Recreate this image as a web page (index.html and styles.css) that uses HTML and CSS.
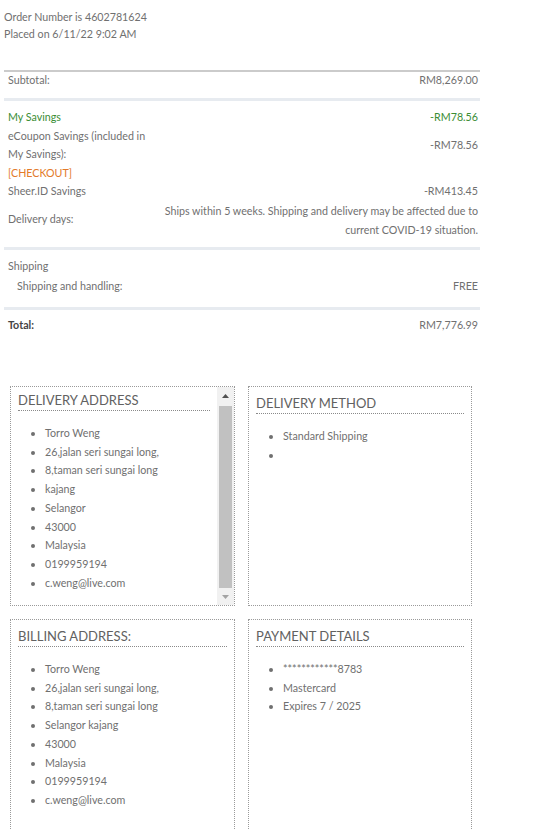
FILE: index.html
```html
<!DOCTYPE html>
<html lang="en">
<head>
<meta charset="utf-8">
<title>Order details</title>
<link rel="stylesheet" href="styles.css">
</head>
<body>
<main class="page">
  <section class="order-info">
    <p>Order Number is 4602781624</p>
    <p>Placed on 6/11/22 9:02 AM</p>
  </section>

  <section class="summary">
    <div class="sec sec-subtotal">
      <div class="row"><span class="label">Subtotal:</span><span class="value">RM8,269.00</span></div>
    </div>
    <div class="sec sec-savings">
      <div class="row savings"><span class="label">My Savings</span><span class="value">-RM78.56</span></div>
      <div class="row"><span class="label">eCoupon Savings (included in My Savings):</span><span class="value">-RM78.56</span></div>
      <div class="row"><span class="label checkout">[CHECKOUT]</span><span class="value"></span></div>
      <div class="row"><span class="label">Sheer.ID Savings</span><span class="value">-RM413.45</span></div>
      <div class="row row-wrap"><span class="label">Delivery days:</span><span class="value">Ships within 5 weeks. Shipping and delivery may be affected due to current COVID-19 situation.</span></div>
    </div>
    <div class="sec sec-shipping">
      <div class="row"><span class="label">Shipping</span><span class="value"></span></div>
      <div class="row indent"><span class="label">Shipping and handling:</span><span class="value">FREE</span></div>
    </div>
    <div class="sec sec-total">
      <div class="row"><span class="label total-label">Total:</span><span class="value">RM7,776.99</span></div>
    </div>
  </section>

  <section class="boxes">
    <article class="box">
      <div class="box-body scrolled">
        <h2 class="box-title">Delivery Address</h2>
        <ul class="box-list">
          <li>Torro Weng</li>
          <li>26,jalan seri sungai long,</li>
          <li>8,taman seri sungai long</li>
          <li>kajang</li>
          <li>Selangor</li>
          <li>43000</li>
          <li>Malaysia</li>
          <li>0199959194</li>
          <li>c.weng@live.com</li>
        </ul>
      </div>
      <div class="scrollbar" aria-hidden="true">
        <div class="sb-btn"><svg width="7" height="4" viewBox="0 0 7 4"><path d="M0 4 L3.5 0 L7 4 Z" fill="#505050"/></svg></div>
        <div class="sb-track"><div class="sb-thumb"></div></div>
        <div class="sb-btn"><svg width="7" height="4" viewBox="0 0 7 4"><path d="M0 0 L3.5 4 L7 0 Z" fill="#a3a3a3"/></svg></div>
      </div>
    </article>

    <article class="box">
      <div class="box-body">
        <h2 class="box-title">Delivery Method</h2>
        <ul class="box-list">
          <li>Standard Shipping</li>
          <li></li>
        </ul>
      </div>
    </article>

    <article class="box">
      <div class="box-body">
        <h2 class="box-title">Billing Address:</h2>
        <ul class="box-list">
          <li>Torro Weng</li>
          <li>26,jalan seri sungai long,</li>
          <li>8,taman seri sungai long</li>
          <li>Selangor kajang</li>
          <li>43000</li>
          <li>Malaysia</li>
          <li>0199959194</li>
          <li>c.weng@live.com</li>
        </ul>
      </div>
    </article>

    <article class="box">
      <div class="box-body">
        <h2 class="box-title">Payment Details</h2>
        <ul class="box-list">
          <li>************8783</li>
          <li>Mastercard</li>
          <li>Expires 7 / 2025</li>
        </ul>
      </div>
    </article>
  </section>
</main>
</body>
</html>
```

FILE: styles.css
```css
* { box-sizing: border-box; }

html { overflow: hidden; }

html, body {
  margin: 0;
  padding: 0;
  background: #fff;
}

body {
  font-family: Lato, "Open Sans", "Liberation Sans", sans-serif;
  font-size: 10.7px;
  color: #707070;
}

.page {
  padding: 8px 4px 0;
}

.order-info p {
  margin: 0;
  line-height: 17px;
}

.summary {
  width: 476px;
  margin-top: 28px;
}

.sec {
  padding-left: 4px;
  padding-right: 2px;
}

.row {
  display: flex;
  align-items: center;
  justify-content: space-between;
  line-height: 18.5px;
}

.label {
  flex: 0 0 145px;
}

.value {
  flex: 1;
  text-align: right;
}

.sec-subtotal {
  border-top: 2px solid #cbcbcb;
  padding-top: 1px;
  padding-bottom: 11px;
}

.sec-subtotal .row {
  line-height: 14px;
}

.sec-savings {
  border-top: 3px solid #e7ebf0;
  padding-top: 7px;
  padding-bottom: 8px;
}

.savings {
  color: #3a8d34;
}

.checkout {
  color: #e37a2a;
}

.row-wrap .value {
  line-height: 19px;
}

.sec-shipping {
  border-top: 3px solid #e7ebf0;
  padding-top: 6px;
  padding-bottom: 11px;
}

.sec-shipping .row {
  line-height: 20px;
}

.indent {
  padding-left: 9px;
}

.sec-total {
  border-top: 3px solid #e7ebf0;
  padding-top: 6px;
}

.total-label {
  font-weight: 700;
  color: #444;
}

.boxes {
  display: grid;
  grid-template-columns: 225px 224px;
  column-gap: 13px;
  row-gap: 13px;
  margin: 52px 0 0 6px;
}

.box {
  height: 220px;
  border: 1px dotted #9a9a9a;
  display: flex;
}

.box-body {
  flex: 1;
  min-width: 0;
  padding: 8px 7px 0;
}

.box-body.scrolled {
  padding-top: 5px;
}

.box-title {
  margin: 0;
  font-size: 13px;
  font-weight: 400;
  line-height: 16px;
  text-transform: uppercase;
  color: #616161;
  padding-bottom: 2px;
  border-bottom: 1px dotted #8a8a8a;
}

.box-list {
  margin: 13px 0 0;
  padding-left: 27px;
  line-height: 18.7px;
}

.box-list li {
  min-height: 18.7px;
}

.scrollbar {
  flex: 0 0 17px;
  display: flex;
  flex-direction: column;
  background: #f1f1f1;
}

.sb-btn {
  height: 17px;
  display: flex;
  align-items: center;
  justify-content: center;
}

.sb-btn svg {
  display: block;
}

.sb-track {
  flex: 1;
  display: flex;
  padding: 2px 2px 0;
}

.sb-thumb {
  flex: 1;
  background: #c1c1c1;
}
```
